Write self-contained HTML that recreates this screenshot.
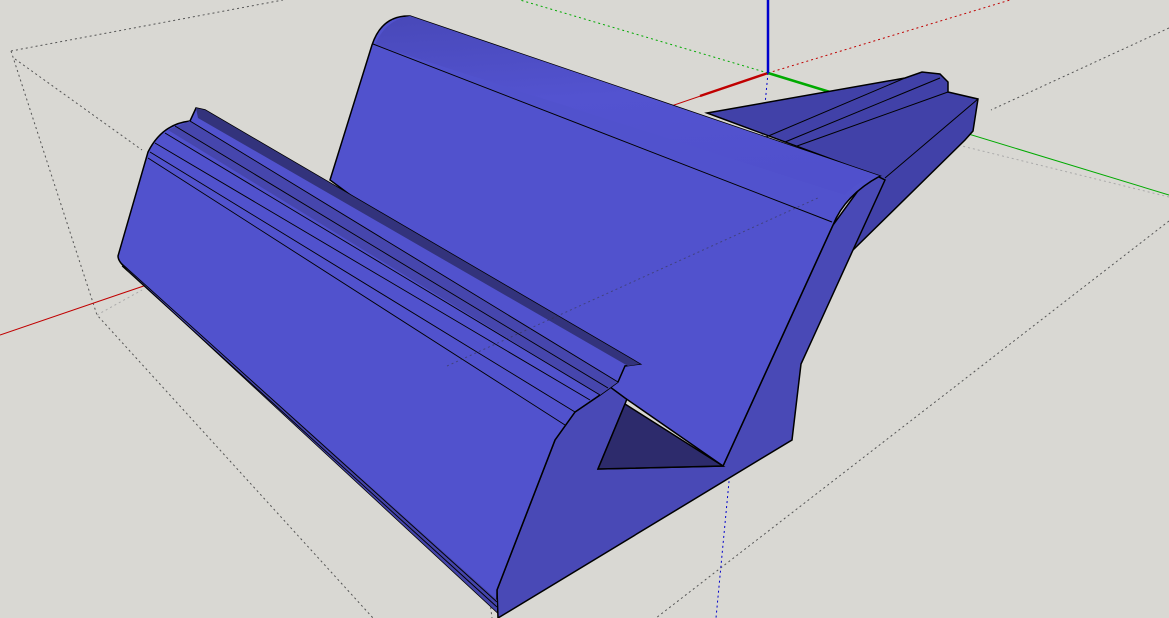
<!DOCTYPE html>
<html><head><meta charset="utf-8"><style>html,body{margin:0;padding:0;background:#d9d8d3;overflow:hidden}svg{display:block}</style></head>
<body>
<svg width="1169" height="618" viewBox="0 0 1169 618" xmlns="http://www.w3.org/2000/svg">
<rect width="1169" height="618" fill="#d9d8d3"/>
<g fill="none" stroke="#555" stroke-width="1" stroke-dasharray="2,3">
<path d="M11,51 L283,0"/>
<path d="M11,51 L97,315 L373,618"/>
<path d="M15,59 L142,150"/>
<path d="M1169,28 L991,110"/>
<path d="M1169,221 L656,618"/>
<path d="M462,374 L492,618"/>
</g>
<g fill="none" stroke="#aaa" stroke-width="1" stroke-dasharray="2,3">
<path d="M1169,197 L962,146"/>
<path d="M97,315 L142,290"/>
</g>
<path d="M0,335 L768,73" stroke="#c00000" stroke-width="1"/>
<path d="M700,96 L768,73" stroke="#c00000" stroke-width="2.5"/>
<path d="M768,73 L1010,0" stroke="#c00000" stroke-width="1" stroke-dasharray="2,3"/>
<path d="M768,73 L1169,195" stroke="#00aa00" stroke-width="1"/>
<path d="M768,73 L830,92" stroke="#00aa00" stroke-width="2.5"/>
<path d="M768,73 L520,0" stroke="#00aa00" stroke-width="1" stroke-dasharray="2,3"/>
<path d="M768,0 L768,73" stroke="#0000cc" stroke-width="2.5"/>
<path d="M768,73 L716,618" stroke="#0000cc" stroke-width="1" stroke-dasharray="2,3"/>
<!-- tail -->
<path d="M707,113 L905,78 L922,72 L940,74 L948,82 L948,92 L978,99 L973,131 L965,140 L853,250 L877,176 Z" fill="#4141a8" stroke="#000" stroke-width="1.5"/>
<path d="M766,137 L905,78 M785,142 L940,78 M797,146 L948,92 M885,178 L978,99" stroke="#000" stroke-width="1" fill="none"/>
<!-- right faces -->
<path d="M640,365 L625,404 L598,469 L723,466 L833,225 L860,188 L877,176 L885,180 L853,250 L812,340 L801,364 L792,440 L498,618 L497,590 L555,440 L575,412 L600,395 L618,382 L625,366 Z" fill="#4949b6" stroke="#000" stroke-width="1.5"/>
<!-- back panel -->
<defs><linearGradient id="g1" x1="0" y1="0" x2="0.15" y2="1"><stop offset="0" stop-color="#4848b8"/><stop offset="0.5" stop-color="#5353d0"/><stop offset="1" stop-color="#5050cc"/></linearGradient></defs>
<path d="M372,45 Q382,15 410,16 L880,176 Q845,195 833,225 L723,466 L625,398 L330,180 Z" fill="#5152cd" stroke="#000" stroke-width="1.5"/>
<path d="M410,16 L880,176 Q858,180 845,195 L375,45 Q385,20 410,16 Z" fill="url(#g1)"/>
<path d="M373,44 L832,222" stroke="#000" stroke-width="1"/>
<path d="M880,176 Q845,195 833,225 L723,466" stroke="#000" stroke-width="1" fill="none"/>
<!-- triangle -->
<path d="M625,404 L598,469 L723,466 Z" fill="#2d2b6c" stroke="#000" stroke-width="1.5"/>
<!-- front rail -->
<path d="M118,256 L148,152 Q162,124 190,121 L196,108 L205,110 L640,364 L625,366 L618,382 L600,395 L575,412 L555,440 L497,590 L497,612 L128,270 Q118,262 118,256 Z" fill="#5152cd" stroke="#000" stroke-width="1.5"/>
<path d="M196,108 L205,110 L640,364 L628,366 L198,118 Z" fill="#33337c"/>
<path d="M168,130 L190,121 L618,382 L600,395 Z" fill="#4646ad"/>
<path d="M120,262 L497,600 L497,612 L128,270 Z" fill="#4444aa"/>
<g stroke="#000" stroke-width="0.9" fill="none">
<path d="M190,121 L618,382"/>
<path d="M175,126 L608,388"/>
<path d="M165,133 L600,395"/>
<path d="M155,143 L590,400"/>
<path d="M150,152 L575,412"/>
<path d="M148,158 L565,425"/>
<path d="M120,262 L497,602"/>
<path d="M122,266 L497,607"/>
<path d="M555,440 L497,590"/>
</g>
<path d="M447,366 L820,197" stroke="#333" stroke-width="1" stroke-dasharray="2,3" opacity="0.5"/>
</svg>
</body></html>
